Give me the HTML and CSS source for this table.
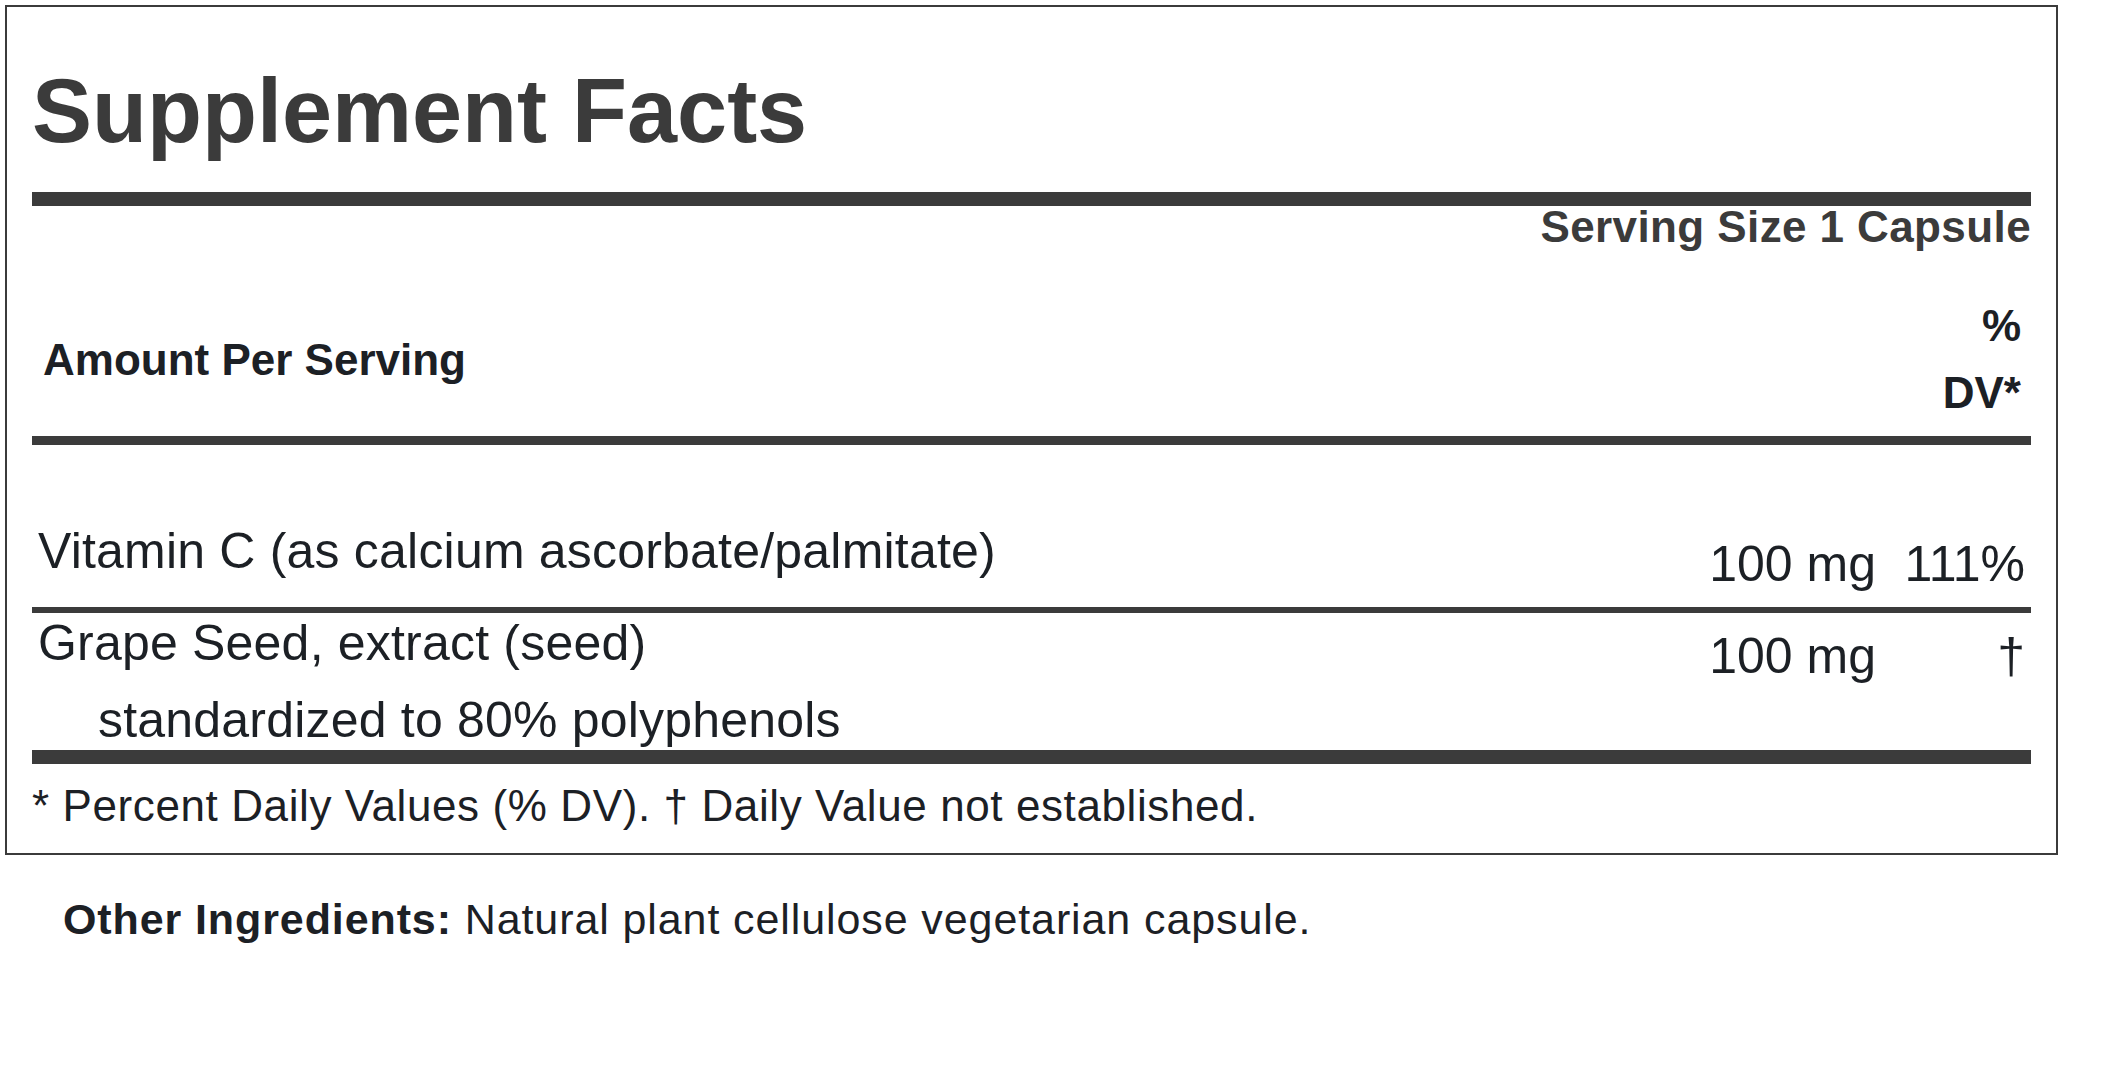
FILE: index.html
```html
<!DOCTYPE html>
<html lang="en">
<head>
<meta charset="utf-8">
<title>Supplement Facts</title>
<link rel="stylesheet" href="styles.css">
</head>
<body>
<div class="label">
  <h1 class="title">Supplement Facts</h1>
  <div class="rule rule-thick rule-after-title"></div>
  <div class="serving">Serving Size 1 Capsule</div>
  <div class="head-row">
    <div class="aps">Amount Per Serving</div>
    <div class="dv-head">%<br>DV*</div>
  </div>
  <div class="rule rule-medium"></div>
  <div class="row row-a">
    <div class="name">Vitamin C (as calcium ascorbate/palmitate)</div>
    <div class="amt">100 mg</div>
    <div class="dv">111%</div>
  </div>
  <div class="rule rule-thin"></div>
  <div class="row row-b">
    <div class="name">
      <div>Grape Seed, extract (seed)</div>
      <div class="sub">standardized to 80% polyphenols</div>
    </div>
    <div class="amt">100 mg</div>
    <div class="dv">†</div>
  </div>
  <div class="rule rule-thick"></div>
  <p class="foot">* Percent Daily Values (% DV). † Daily Value not established.</p>
</div>
<p class="other"><strong>Other Ingredients:</strong> Natural plant cellulose vegetarian capsule.</p>
</body>
</html>
```

FILE: styles.css
```css
body {
  margin: 0;
  background: #ffffff;
  font-family: "Liberation Sans", Arial, sans-serif;
  color: #1c2025;
}

.label {
  margin: 5px 0 0 5px;
  width: 2053px;
  box-sizing: border-box;
  border: 2px solid #3b3b3b;
  padding: 54px 25px 22px;
}

.title {
  margin: 0;
  font-size: 90px;
  line-height: 100px;
  font-weight: 700;
  color: #3b3b3b;
}

.rule {
  background: #3b3b3b;
}

.rule-thick {
  height: 14px;
}

.rule-after-title {
  margin-top: 31px;
}

.rule-medium {
  height: 9px;
  margin-top: 10px;
}

.rule-thin {
  height: 6px;
}

.serving {
  text-align: right;
  font-size: 44px;
  line-height: 42px;
  font-weight: 700;
  letter-spacing: 0.4px;
  color: #3b3b3b;
}

.head-row {
  display: flex;
  justify-content: space-between;
  align-items: center;
  margin-top: 44px;
  padding: 0 10px 0 11px;
  font-size: 44px;
  line-height: 67px;
  font-weight: 700;
}

.dv-head {
  text-align: right;
}

.row {
  display: grid;
  grid-template-columns: 1fr 200px 149px;
  align-items: start;
  padding: 0 6px;
  font-size: 50px;
  line-height: 60px;
}

.name {
  letter-spacing: 0.2px;
}

.row-a {
  padding-top: 76px;
  padding-bottom: 13px;
}

.amt,
.dv {
  margin-top: 13px;
  text-align: right;
}

.sub {
  margin-top: 17px;
  padding-left: 60px;
}

.foot {
  margin: 17px 0 0;
  font-size: 44px;
  line-height: 50px;
  letter-spacing: 0.6px;
}

.other {
  margin: 39px 0 0 63px;
  font-size: 43px;
  line-height: 50px;
  letter-spacing: 0.9px;
}
```
